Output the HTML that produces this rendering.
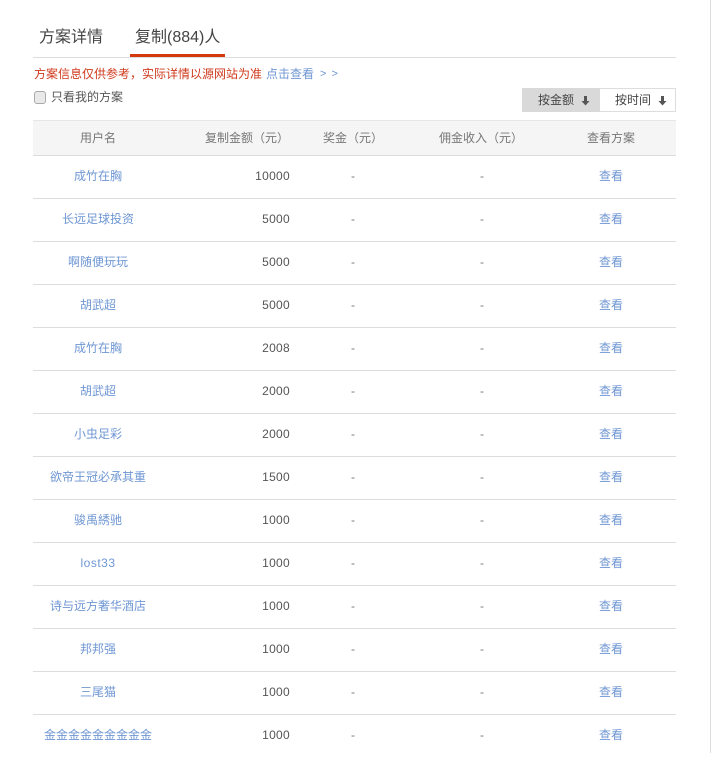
<!DOCTYPE html>
<html lang="zh"><head><meta charset="utf-8"><title>复制</title>
<style>
html,body{margin:0;padding:0;background:#fff}
body{width:711px;height:753px;overflow:hidden;position:relative;font-family:"Liberation Sans","Noto Sans CJK SC",sans-serif;font-size:12px;color:#555}
.a{position:absolute;white-space:nowrap}
.l{color:#6f97d3}
.row{position:absolute;left:33px;width:643px;height:43px;border-bottom:1px solid #ddd;box-sizing:border-box}
.row span{position:absolute;top:0;line-height:41px;white-space:nowrap}
.n{left:65px;transform:translateX(-50%);color:#6f97d3}
.m{right:386px;color:#555;letter-spacing:.3px}
.d1{left:318px;color:#777}
.d2{left:447px;color:#777}
.v{left:578px;transform:translateX(-50%);color:#6f97d3}
.h{position:absolute;top:120px;line-height:36px;color:#777;white-space:nowrap;transform:translateX(-50%)}
</style></head><body>
<div class="a" style="left:710px;top:0;width:1px;height:753px;background:#ddd"></div>
<div class="a" style="left:39px;top:26px;font-size:16px;line-height:24px;color:#444">方案详情</div>
<div class="a" style="left:135px;top:26px;font-size:16px;line-height:24px;color:#444">复制(884)人</div>
<div class="a" style="left:33px;top:57px;width:643px;height:1px;background:#ddd"></div>
<div class="a" style="left:130px;top:54px;width:95px;height:3px;background:#d4380d"></div>
<div class="a" style="left:34px;top:65px;line-height:18px;color:#cf3a1c">方案信息仅供参考，实际详情以源网站为准</div>
<div class="a l" style="left:266px;top:65px;line-height:18px">点击查看</div>
<div class="a l" style="left:320px;top:65px;line-height:18px;font-size:11px;letter-spacing:1px">&gt; &gt;</div>
<div class="a" style="left:34px;top:91px;width:12px;height:13px;box-sizing:border-box;border:1px solid #aaa;border-radius:3px;background:#e9e9e9"></div>
<div class="a" style="left:51px;top:88px;line-height:18px;color:#555">只看我的方案</div>
<div class="a" style="left:522px;top:88px;width:78px;height:24px;background:#d9d9d9"></div>
<div class="a" style="left:600px;top:88px;width:76px;height:24px;box-sizing:border-box;border:1px solid #ddd;border-left:0;background:#fff"></div>
<div class="a" style="left:538px;top:88px;line-height:24px;color:#444">按金额</div>
<div class="a" style="left:615px;top:88px;line-height:24px;color:#444">按时间</div>
<svg class="a" style="left:581px;top:96px" width="9" height="10" viewBox="0 0 9 10"><path d="M3 0h3v5h2.500L4.500 9.500 .5 5H3z" fill="#555"/></svg>
<svg class="a" style="left:658px;top:96px" width="9" height="10" viewBox="0 0 9 10"><path d="M3 0h3v5h2.500L4.500 9.500 .5 5H3z" fill="#555"/></svg>
<div class="a" style="left:33px;top:120px;width:643px;height:36px;box-sizing:border-box;background:#f5f5f5;border-top:1px solid #e6e6e6;border-bottom:1px solid #ddd"></div>
<div class="h" style="left:247px">复制金额（元）</div>
<div class="h" style="left:98px">用户名</div>
<div class="h" style="left:353px">奖金（元）</div>
<div class="h" style="left:481px">佣金收入（元）</div>
<div class="h" style="left:611px">查看方案</div>
<div class="row" style="top:156px"><span class="n">成竹在胸</span><span class="m">10000</span><span class="d1">-</span><span class="d2">-</span><span class="v">查看</span></div>
<div class="row" style="top:199px"><span class="n">长远足球投资</span><span class="m">5000</span><span class="d1">-</span><span class="d2">-</span><span class="v">查看</span></div>
<div class="row" style="top:242px"><span class="n">啊随便玩玩</span><span class="m">5000</span><span class="d1">-</span><span class="d2">-</span><span class="v">查看</span></div>
<div class="row" style="top:285px"><span class="n">胡武超</span><span class="m">5000</span><span class="d1">-</span><span class="d2">-</span><span class="v">查看</span></div>
<div class="row" style="top:328px"><span class="n">成竹在胸</span><span class="m">2008</span><span class="d1">-</span><span class="d2">-</span><span class="v">查看</span></div>
<div class="row" style="top:371px"><span class="n">胡武超</span><span class="m">2000</span><span class="d1">-</span><span class="d2">-</span><span class="v">查看</span></div>
<div class="row" style="top:414px"><span class="n">小虫足彩</span><span class="m">2000</span><span class="d1">-</span><span class="d2">-</span><span class="v">查看</span></div>
<div class="row" style="top:457px"><span class="n">欲帝王冠必承其重</span><span class="m">1500</span><span class="d1">-</span><span class="d2">-</span><span class="v">查看</span></div>
<div class="row" style="top:500px"><span class="n">骏禹綉驰</span><span class="m">1000</span><span class="d1">-</span><span class="d2">-</span><span class="v">查看</span></div>
<div class="row" style="top:543px"><span class="n" style="letter-spacing:.5px">lost33</span><span class="m">1000</span><span class="d1">-</span><span class="d2">-</span><span class="v">查看</span></div>
<div class="row" style="top:586px"><span class="n">诗与远方奢华酒店</span><span class="m">1000</span><span class="d1">-</span><span class="d2">-</span><span class="v">查看</span></div>
<div class="row" style="top:629px"><span class="n">邦邦强</span><span class="m">1000</span><span class="d1">-</span><span class="d2">-</span><span class="v">查看</span></div>
<div class="row" style="top:672px"><span class="n">三尾猫</span><span class="m">1000</span><span class="d1">-</span><span class="d2">-</span><span class="v">查看</span></div>
<div class="row" style="top:715px;border-bottom:0"><span class="n">金金金金金金金金金</span><span class="m">1000</span><span class="d1">-</span><span class="d2">-</span><span class="v">查看</span></div>
</body></html>
